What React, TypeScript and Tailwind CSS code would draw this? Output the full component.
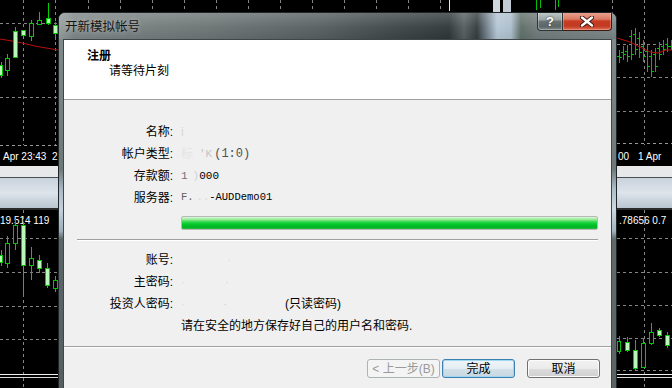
import React from "react";

type Candle = { x: number; w: number; top: number; bot: number; wt?: number; wb?: number; fill: boolean };

const candles: Candle[] = [
  // top-left chart
  { x: -1, w: 4, top: 65, bot: 75, wt: 62, wb: 78, fill: true },
  { x: 5, w: 5, top: 58, bot: 70, wt: 54, wb: 76, fill: false },
  { x: 13, w: 5, top: 31, bot: 57, wt: 27, wb: 58, fill: true },
  { x: 21, w: 5, top: 30, bot: 35, fill: true },
  { x: 29, w: 5, top: 23, bot: 36, wt: 20, wb: 41, fill: false },
  { x: 37, w: 5, top: 20, bot: 24, wt: 12, fill: false },
  { x: 46, w: 5, top: 18, bot: 23, wt: 3, wb: 25, fill: true },
  { x: 53, w: 5, top: 25, bot: 33, wt: 22, wb: 40, fill: true },
  // bottom-left chart
  { x: -1, w: 4, top: 255, bot: 262, wt: 250, wb: 266, fill: true },
  { x: 5, w: 5, top: 243, bot: 263, wt: 236, wb: 268, fill: false },
  { x: 13, w: 5, top: 225, bot: 243, wt: 219, wb: 250, fill: false },
  { x: 21, w: 5, top: 225, bot: 265, wb: 297, fill: true },
  { x: 29, w: 5, top: 258, bot: 265, wt: 247, wb: 280, fill: false },
  { x: 37, w: 5, top: 260, bot: 268, wt: 255, wb: 273, fill: true },
  { x: 45, w: 5, top: 268, bot: 285, wt: 263, wb: 288, fill: true },
  { x: 53, w: 5, top: 280, bot: 288, wt: 276, wb: 292, fill: false },
  // bottom-right chart
  { x: 617, w: 4, top: 341, bot: 351, wt: 336, wb: 354, fill: false },
  { x: 625, w: 5, top: 342, bot: 350, wt: 337, wb: 352, fill: true },
  { x: 633, w: 5, top: 350, bot: 368, wt: 340, wb: 370, fill: true },
  { x: 641, w: 5, top: 343, bot: 367, wt: 338, wb: 368, fill: false },
  { x: 649, w: 5, top: 332, bot: 343, wt: 323, wb: 345, fill: false },
  { x: 657, w: 5, top: 330, bot: 335, wt: 328, wb: 337, fill: true },
  { x: 665, w: 5, top: 335, bot: 345, wt: 332, wb: 348, fill: true },
];

const bars: [number, number, number][] = [
  [619, 50, 63], [623, 46, 60], [627, 45, 62], [631, 30, 60], [635, 28, 55], [639, 32, 58],
  [643, 40, 62], [647, 45, 72], [651, 50, 77], [655, 48, 72], [659, 42, 60], [663, 40, 55],
  [667, 38, 52], [671, 40, 50],
];

function CandleShape({ c }: { c: Candle }) {
  const cx = c.x + Math.floor(c.w / 2) + 0.5;
  return (
    <g>
      {c.wt !== undefined && <line x1={cx} x2={cx} y1={c.wt} y2={c.top} stroke="#00d000" />}
      {c.wb !== undefined && <line x1={cx} x2={cx} y1={c.bot} y2={c.wb} stroke="#00d000" />}
      <rect
        x={c.x + 0.5}
        y={c.top + 0.5}
        width={c.w - 1}
        height={c.bot - c.top}
        fill={c.fill ? "#b8f7b8" : "#000"}
        stroke="#00c800"
      />
    </g>
  );
}

function Dashed({ x1, y1, x2, y2, c = "#858585" }: { x1: number; y1: number; x2: number; y2: number; c?: string }) {
  return <line x1={x1} y1={y1} x2={x2} y2={y2} stroke={c} strokeDasharray="3 3" />;
}

function ChartBackground() {
  const topVerts = [23, 55, 88, 120, 152, 184, 216, 248, 280, 312, 344, 376, 408, 440];
  return (
    <svg className="absolute left-0 top-0" width="672" height="388" viewBox="0 0 672 388">
      <defs>
        <linearGradient id="split" x1="0" y1="0" x2="0" y2="1">
          <stop offset="0" stopColor="#c9d3dd" />
          <stop offset="0.5" stopColor="#dde4eb" />
          <stop offset="1" stopColor="#b9c5d0" />
        </linearGradient>
      </defs>
      {topVerts.map((x) => (
        <Dashed key={x} x1={x + 0.5} y1={0} x2={x + 0.5} y2={x < 60 ? 145 : 12} />
      ))}
      <Dashed x1={0} y1={23.5} x2={58} y2={23.5} />
      <Dashed x1={0} y1={97.5} x2={58} y2={97.5} />
      <Dashed x1={0} y1={145.5} x2={58} y2={145.5} c="#9a9a9a" />
      <line x1={449.5} y1={0} x2={449.5} y2={11} stroke="#e8e8e8" />
      <rect x={493} y={0} width={7} height={12} fill="#cfd7df" />
      <rect x={503} y={0} width={8} height={12} fill="#c3ccd6" />
      <line x1={536.5} y1={0} x2={536.5} y2={10} stroke="#00c000" />
      <line x1={540.5} y1={0} x2={540.5} y2={8} stroke="#00c000" />
      <line x1={555.5} y1={0} x2={555.5} y2={10} stroke="#00c000" />
      <line x1={558.5} y1={0} x2={558.5} y2={7} stroke="#00c000" />
      <polyline points="0,39 12,41 22,43 35,46 46,48 58,50" fill="none" stroke="#b81010" strokeWidth="1" />
      <Dashed x1={612.5} y1={0} x2={612.5} y2={145} />
      <Dashed x1={644.5} y1={0} x2={644.5} y2={145} />
      <Dashed x1={617} y1={44.5} x2={672} y2={44.5} />
      <Dashed x1={617} y1={77.5} x2={672} y2={77.5} />
      <Dashed x1={617} y1={111.5} x2={672} y2={111.5} />
      <Dashed x1={617} y1={143.5} x2={672} y2={143.5} c="#9a9a9a" />
      {bars.map(([x, h, l]) => (
        <g key={x} stroke="#00c000">
          <line x1={x + 0.5} x2={x + 0.5} y1={h} y2={l} />
          <line x1={x - 2} x2={x} y1={h + 6.5} y2={h + 6.5} />
          <line x1={x + 1} x2={x + 3} y1={l - 5.5} y2={l - 5.5} />
        </g>
      ))}
      <polyline points="617,38 630,42 640,47 650,52 658,53 666,50 672,50" fill="none" stroke="#b81010" />
      <text x={3} y={160} fill="#ffffff" fontSize="10" fontFamily="Liberation Sans, sans-serif">
        Apr 23:43
      </text>
      <text x={52} y={160} fill="#ffffff" fontSize="10" fontFamily="Liberation Sans, sans-serif">
        2
      </text>
      <text x={618} y={160} fill="#ffffff" fontSize="10" fontFamily="Liberation Sans, sans-serif">
        00
      </text>
      <text x={638} y={160} fill="#ffffff" fontSize="10" fontFamily="Liberation Sans, sans-serif">
        1 Apr
      </text>
      <rect x={0} y={166} width={672} height={11} fill="#e6e8ea" />
      <rect x={0} y={177} width={672} height={1} fill="#4a4e52" />
      <rect x={0} y={178} width={672} height={30} fill="url(#split)" />
      <rect x={0} y={208} width={672} height={2} fill="#2a2c2e" />
      <text x={0} y={224} fill="#ffffff" fontSize="10" fontFamily="Liberation Sans, sans-serif">
        19.514 119
      </text>
      <text x={619} y={224} fill="#ffffff" fontSize="10" fontFamily="Liberation Sans, sans-serif">
        .78656 0.7
      </text>
      <Dashed x1={23.5} y1={210} x2={23.5} y2={388} />
      <Dashed x1={644.5} y1={210} x2={644.5} y2={388} />
      {[238, 272, 306, 339].map((y) => (
        <Dashed key={y} x1={0} y1={y + 0.5} x2={58} y2={y + 0.5} />
      ))}
      {[238, 272, 305, 338, 370].map((y) => (
        <Dashed key={"r" + y} x1={617} y1={y + 0.5} x2={672} y2={y + 0.5} />
      ))}
      <line x1={0} x2={672} y1={374.5} y2={374.5} stroke="#f0f0f0" />
      <line x1={0} x2={672} y1={377.5} y2={377.5} stroke="#d8d8d8" />
      {candles.map((c, i) => (
        <CandleShape key={i} c={c} />
      ))}
    </svg>
  );
}

function CloseGlyph() {
  return (
    <svg width="14" height="11" viewBox="0 0 14 11">
      <path d="M2 1.5 L12 9.5 M12 1.5 L2 9.5" stroke="#3a1510" strokeWidth="4.2" strokeLinecap="round" />
      <path d="M2 1.5 L12 9.5 M12 1.5 L2 9.5" stroke="#ffffff" strokeWidth="2.4" strokeLinecap="round" />
    </svg>
  );
}

function Row({ label, children }: { label: string; children?: React.ReactNode }) {
  return (
    <div className="flex h-[22px] items-center">
      <div className="w-[109px] text-right text-[#000]">{label}</div>
      <div className="ml-[8px] flex items-center">{children}</div>
    </div>
  );
}

function Dialog() {
  return (
    <div className="absolute left-[58px] top-[12px] flex h-[392px] w-[559px] flex-col overflow-hidden rounded-t-[7px] border border-[#1f2628] bg-[#6e7878] shadow-[inset_0_0_0_1px_rgba(255,255,255,0.35)]">
      <div className="flex h-[26px] shrink-0 bg-[linear-gradient(180deg,rgba(255,255,255,0.2)_0%,rgba(255,255,255,0.04)_55%,rgba(0,0,0,0.05)_100%),linear-gradient(90deg,#959d9d_0px,#7e8686_15px,#6b7373_150px,#565e60_260px,#3f4749_330px,#2f3739_390px,#565e60_405px,#343c3e_418px,#7f8f9b_430px,#b5c5d3_438px,#abbdcc_452px,#5e6e67_462px,#707a7a_478px,#7b8585_557px)]">
        <div className="pl-[6px] pt-[5px] font-['Noto_Sans_CJK_SC',sans-serif] text-[12.5px] leading-[16px] text-[#141414] [text-shadow:0_0_5px_rgba(255,255,255,0.55)]">
          开新模拟帐号
        </div>
        <div className="ml-auto mr-[4px] -mt-px flex h-[19px]">
          <div className="flex w-[26px] items-center justify-center rounded-bl-[4px] border border-t-0 border-[#2c3436] bg-[linear-gradient(180deg,#c3cbcb_0%,#98a2a2_45%,#6a7474_50%,#5c6666_80%,#7e8a8a_100%)] font-['Liberation_Sans',sans-serif] text-[13px] font-bold leading-none text-white shadow-[inset_0_0_0_1px_rgba(255,255,255,0.3)] [text-shadow:0_0_2px_#222]">
            ?
          </div>
          <div className="flex w-[49px] items-center justify-center rounded-br-[4px] border border-l-0 border-t-0 border-[#3b1a14] bg-[linear-gradient(180deg,#eba796_0%,#dc7a63_40%,#c83c22_50%,#c23a22_78%,#df7158_100%)] shadow-[inset_0_0_0_1px_rgba(255,210,200,0.35)]">
            <CloseGlyph />
          </div>
        </div>
      </div>
      <div className="flex flex-1">
        <div className="w-[4px] bg-[linear-gradient(180deg,#808a8a_0px,#6e7878_130px,#a9b8c6_150px,#c4d1dc_170px,#9eaebb_192px,#5c6668_200px,#545c5e_392px)]" />
        <div className="flex flex-1 flex-col border border-b-0 border-[#3f4749] bg-[#f0f0f0] font-['Liberation_Sans','Noto_Sans_CJK_SC',sans-serif] text-[12px] text-black">
          <div className="h-[60px] shrink-0 border-b border-[#a0a0a0] bg-white pl-[23px] pt-[9px] leading-[15px]">
            <div className="font-bold">注册</div>
            <div className="pl-[22px]">请等待片刻</div>
          </div>
          <div className="flex flex-col pt-[21px]">
            <Row label="名称:">
              <span className="text-[#d6d6d6]">i</span>
            </Row>
            <Row label="帐户类型:">
              <span className="text-[#e4e4e4]">标</span>
              <span className="ml-[6px] font-['Liberation_Mono',monospace] text-[11px] text-[#c4c4c4]">'K</span>
              <span className="ml-[2px] font-['Liberation_Mono',monospace] text-[12px] text-[#505050]">(1:0)</span>
            </Row>
            <Row label="存款额:">
              <span className="font-['Liberation_Mono',monospace] text-[11px] text-[#707070]">1</span>
              <span className="ml-[5px] font-['Liberation_Mono',monospace] text-[11px] text-[#d0d0d0]">)</span>
              <span className="font-['Liberation_Mono',monospace] text-[11px] text-black">000</span>
            </Row>
            <Row label="服务器:">
              <span className="font-['Liberation_Mono',monospace] text-[10.5px] text-[#606060]">F.</span>
              <span className="ml-[3px] font-['Liberation_Mono',monospace] text-[10.5px] text-[#dadada]">..</span>
              <span className="font-['Liberation_Mono',monospace] text-[10.5px] text-black">-AUDDemo01</span>
            </Row>
            <div className="ml-[117px] mt-[7px] h-[14px] w-[417px] rounded-[2px] border border-[#b8b8b8] bg-[linear-gradient(180deg,#daf8da_0%,#93ea93_22%,#2ad648_42%,#03c72c_62%,#00b424_85%,#2cbe42_100%)]" />
            <div className="ml-[13px] mt-[9px] h-[2px] w-[521px] border-t border-b border-t-[#a0a0a0] border-b-white" />
            <div className="mt-[8px] flex flex-col">
              <Row label="账号:">
                <span className="ml-[46px] text-[#dcdcdc]">·</span>
              </Row>
              <Row label="主密码:">
                <span className="text-[#e0e0e0]">·</span>
                <span className="ml-[40px] text-[#dcdcdc]">·</span>
              </Row>
              <Row label="投资人密码:">
                <span className="text-[#dedede]">·</span>
                <span className="ml-[38px] text-[#d4d4d4]">·</span>
                <span className="ml-[58px]">(只读密码)</span>
              </Row>
              <Row label="">
                <span>请在安全的地方保存好自己的用户名和密码.</span>
              </Row>
            </div>
            <div className="mt-[9px] h-[2px] border-t border-b border-t-[#a0a0a0] border-b-white" />
            <div className="mt-[11px] flex justify-end pr-[11px]">
              <div className="flex h-[19px] w-[73px] items-center justify-center rounded-[3px] border border-[#adb2b5] bg-[#f4f4f4] text-[#9a9a9a]">
                &lt; 上一步(B)
              </div>
              <div className="ml-[2px] flex h-[19px] w-[73px] items-center justify-center rounded-[3px] border border-[#3c7fb1] bg-[linear-gradient(180deg,#eef5f9_0%,#e4edf2_50%,#d3e0e8_50%,#c7d7e1_100%)] shadow-[inset_0_0_0_1px_#9fd8f0]">
                完成
              </div>
              <div className="ml-[12px] flex h-[19px] w-[73px] items-center justify-center rounded-[3px] border border-[#707070] bg-[linear-gradient(180deg,#f2f2f2_0%,#ebebeb_50%,#dddddd_50%,#cfcfcf_100%)] shadow-[inset_0_0_0_1px_#fbfbfb]">
                取消
              </div>
            </div>
          </div>
        </div>
        <div className="w-[4px] bg-[linear-gradient(180deg,#808a8a_0px,#6e7878_130px,#aebdcb_150px,#ccd8e2_170px,#a3b3c0_192px,#606a6c_200px,#586062_392px)]" />
      </div>
    </div>
  );
}

export default function App() {
  return (
    <div className="relative h-[388px] w-[672px] overflow-hidden bg-black">
      <ChartBackground />
      <Dialog />
    </div>
  );
}
